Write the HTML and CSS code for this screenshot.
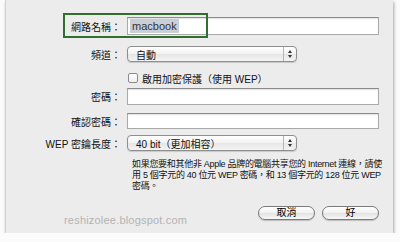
FILE: index.html
```html
<!DOCTYPE html>
<html lang="zh-Hant">
  <head>
    <meta charset="UTF-8" />
    <title>網路設定</title>
    <link rel="stylesheet" href="styles.css">
  </head>
  <body>
    <div class="sheet">
      <div class="highlight"></div>
      <div class="row row--name">
        <label class="row__label">網路名稱：</label>
        <div class="field field--wide"><span class="field__sel">macbook</span></div>
      </div>
      <div class="row row--channel">
        <label class="row__label">頻道：</label>
        <div class="popup">
          <span class="popup__text">自動</span>
          <span class="popup__arrows"><i class="up"></i><i class="down"></i></span>
        </div>
      </div>
      <div class="row row--check">
        <span class="row__label"></span>
        <span class="check"></span>
        <span class="check__text">啟用加密保護（使用 WEP）</span>
      </div>
      <div class="row row--pass">
        <label class="row__label">密碼：</label>
        <div class="field field--wide"></div>
      </div>
      <div class="row row--confirm">
        <label class="row__label">確認密碼：</label>
        <div class="field field--wide"></div>
      </div>
      <div class="row row--wep">
        <label class="row__label">WEP 密鑰長度：</label>
        <div class="popup">
          <span class="popup__text">40 bit（更加相容）</span>
          <span class="popup__arrows"><i class="up"></i><i class="down"></i></span>
        </div>
      </div>
      <p class="note">如果您要和其他非 Apple 品牌的電腦共享您的 Internet 連線，請使<br>用 5 個字元的 40 位元 WEP 密碼，和 13 個字元的 128 位元 WEP<br>密碼。</p>
      <div class="footer">
        <span class="watermark">reshizolee.blogspot.com</span>
        <div class="buttons">
          <button class="btn btn--cancel">取消</button>
          <button class="btn">好</button>
        </div>
      </div>
    </div>
  </body>
</html>
```

FILE: styles.css
```css
* {
  box-sizing: border-box;
}

body {
  margin: 0;
  background: #fbfbfb;
  font-family: "Liberation Sans", "Noto Sans CJK TC", sans-serif;
  font-size: 10px;
  color: #111;
}

.sheet {
  position: relative;
  margin-left: 5px;
  width: 388px;
  height: 233px;
  padding-top: 17px;
  background: #ececec;
  border-left: 1px solid #d4d4d4;
  box-shadow: 1px 2px 3px rgba(0, 0, 0, 0.35);
  display: flex;
  flex-direction: column;
}

/* green outline around the network name */
.highlight {
  position: absolute;
  left: 57px;
  top: 13px;
  width: 145px;
  height: 25px;
  border: 2px solid #2f7030;
}

.row {
  display: flex;
  align-items: center;
}

.row__label {
  width: 121px;
  padding-right: 6px;
  text-align: right;
  flex: none;
}

.row--name { height: 18px; }
.row--channel { height: 16px; margin-top: 11px; }
.row--check { height: 12px; margin-top: 10px; }
.row--pass { height: 17px; margin-top: 4px; }
.row--confirm { height: 16px; margin-top: 8px; }
.row--wep { height: 16px; margin-top: 6px; }

.field {
  height: 100%;
  background: #fff;
  border: 1px solid #a9a9a9;
  border-top-color: #8c8c8c;
  box-shadow: inset 0 1px 1px rgba(0, 0, 0, 0.12);
  display: flex;
  align-items: center;
  padding-left: 2px;
}

.field--wide {
  width: 252px;
}

.field__sel {
  background: #c9cfd9;
  font-size: 11px;
  padding: 0 2px;
  line-height: 14px;
  color: #333;
}

.popup {
  width: 170px;
  height: 100%;
  display: flex;
  align-items: center;
  border: 1px solid #8e8e8e;
  border-radius: 4px;
  background: linear-gradient(#ffffff, #f2f2f2 50%, #e6e6e6 51%, #f4f4f4);
  box-shadow: 0 1px 1px rgba(0, 0, 0, 0.15);
}

.popup__text {
  flex: 1;
  padding-left: 8px;
}

.popup__arrows {
  width: 13px;
  height: 100%;
  border-left: 1px solid #b5b5b5;
  display: flex;
  flex-direction: column;
  align-items: center;
  justify-content: center;
  gap: 2px;
}

.popup__arrows i {
  width: 0;
  height: 0;
  border-left: 2px solid transparent;
  border-right: 2px solid transparent;
}

.popup__arrows .up {
  border-bottom: 3px solid #333;
}

.popup__arrows .down {
  border-top: 3px solid #333;
}

.check {
  width: 10px;
  height: 10px;
  margin-left: 1px;
  background: linear-gradient(#fff, #eee);
  border: 1px solid #8a8a8a;
  border-radius: 2px;
}

.check__text {
  margin-left: 4px;
}

.note {
  margin: 8px 0 0 126px;
  font-size: 9px;
  line-height: 11px;
  letter-spacing: -0.3px;
  white-space: nowrap;
}

.footer {
  display: flex;
  justify-content: space-between;
  margin-top: 14px;
  padding: 0 14px 0 58px;
}

.watermark {
  margin-top: 8px;
  font-family: "Liberation Sans", sans-serif;
  font-size: 11px;
  color: #b3b3b3;
  letter-spacing: 0.2px;
}

.buttons {
  display: flex;
  gap: 7px;
  align-self: flex-start;
}

.btn {
  width: 57px;
  height: 14px;
  padding: 0;
  font: inherit;
  font-size: 10px;
  line-height: 12px;
  border: 1px solid #7a7a7a;
  border-radius: 8px;
  background: linear-gradient(#ffffff, #f0f0f0 50%, #e2e2e2 51%, #f8f8f8);
  box-shadow: 0 1px 1px rgba(0, 0, 0, 0.2);
}
```
